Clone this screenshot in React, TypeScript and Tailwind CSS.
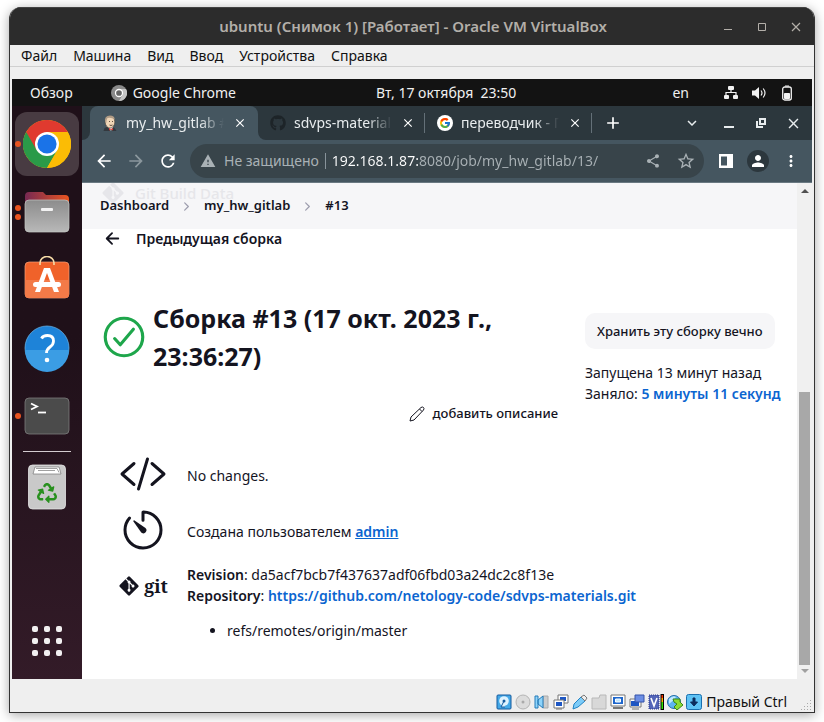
import type { ReactNode } from "react";
import {
  MdAdd,
  MdArrowBack,
  MdArrowForward,
  MdClose,
  MdExpandMore,
  MdMoreVert,
  MdPerson,
  MdRefresh,
  MdShare,
  MdStarBorder,
  MdWarning,
} from "react-icons/md";
import {
  IoArrowBackOutline,
  IoCheckmarkCircleOutline,
  IoChevronForward,
  IoCodeSlashOutline,
  IoTimerOutline,
} from "react-icons/io5";
import { FaGitAlt, FaGithub, FaRecycle } from "react-icons/fa";
import { FcGoogle } from "react-icons/fc";

const menu = ["Файл", "Машина", "Вид", "Ввод", "Устройства", "Справка"];

function TitleBar() {
  return (
    <header className="flex h-[38px] shrink-0 items-center border-t border-[#444] bg-[#2c2c2c] pr-1.5 text-[#b3afa9]">
      <div className="w-24" />
      <h1 className="grow text-center text-[15px] font-semibold">ubuntu (Снимок 1) [Работает] - Oracle VM VirtualBox</h1>
      <div className="flex gap-[18px] pr-1">
        <button aria-label="Свернуть" className="flex size-4 items-center justify-center">
          <svg viewBox="0 0 16 16" className="size-4"><path d="M4 10.5h8" stroke="currentColor" /></svg>
        </button>
        <button aria-label="Развернуть" className="flex size-4 items-center justify-center">
          <svg viewBox="0 0 16 16" className="size-4"><path d="M4.500 4.500h7v7h-7z" fill="none" stroke="currentColor" /></svg>
        </button>
        <button aria-label="Закрыть" className="flex size-4 items-center justify-center">
          <svg viewBox="0 0 16 16" className="size-4"><path d="M4 4l8 8M12 4l-8 8" stroke="currentColor" strokeWidth="1.200" /></svg>
        </button>
      </div>
    </header>
  );
}

function MenuBar() {
  return (
    <nav className="flex h-[22px] shrink-0 items-center gap-4 border-b border-[#d0d0d0] px-[11px] text-sm text-[#111]">
      {menu.map((m) => (
        <button key={m}>{m}</button>
      ))}
    </nav>
  );
}

function ChromeLogo({ className }: { className: string }) {
  return (
    <svg viewBox="0 0 48 48" className={className}>
      <circle cx="24" cy="24" r="24" fill="#fbbc05" />
      <path d="M24 24L3.200 12A24 24 0 0 0 24 48L34.400 30z" fill="#2a9a48" />
      <path d="M24 12H44.800A24 24 0 0 0 3.200 12L13.600 30z" fill="#e03a2f" />
      <path d="M24 12H44.800A24 24 0 0 1 24 48L34.400 30z" fill="#fbbc05" />
      <circle cx="24" cy="24" r="12" fill="#fff" />
      <circle cx="24" cy="24" r="9.600" fill="#1a73e8" />
    </svg>
  );
}

function SystemBar() {
  return (
    <div className="flex h-[27px] shrink-0 items-center bg-[#131313] text-sm text-[#f0f0f0]">
      <div className="flex w-[364px] shrink-0 items-center gap-[38px] pl-[18px]">
        <button>Обзор</button>
        <button className="flex items-center gap-1.5">
          <svg viewBox="0 0 16 16" className="size-4">
            <circle cx="8" cy="8" r="8" fill="#8a8a8a" />
            <path d="M8 4h7A8 8 0 0 1 8 16l3.500-6z" fill="#c4c4c4" />
            <circle cx="8" cy="8" r="3.500" fill="#666" stroke="#fff" strokeWidth="1.300" />
          </svg>
          Google Chrome
        </button>
      </div>
      <button className="whitespace-pre">Вт, 17 октября  23:50</button>
      <div className="flex flex-1 items-center justify-end gap-3 pr-[17px]">
        <button className="mr-[22px]">en</button>
        <svg viewBox="0 0 16 16" className="size-4" fill="#f2f2f2">
          <rect x="5" y="1" width="6" height="4" rx="1" />
          <rect x="1" y="10" width="5" height="4" rx="1" />
          <rect x="10" y="10" width="5" height="4" rx="1" />
          <path d="M3 11V7.500h10V11M8 4v3.500" fill="none" stroke="#f2f2f2" strokeWidth="1.200" />
        </svg>
        <svg viewBox="0 0 16 16" className="size-4" fill="#f2f2f2">
          <path d="M1 5.500h3L8 2v12L4 10.500H1z" />
          <path d="M10 5.500q2 2.500 0 5M12.200 3.500q3.600 4.500 0 9" fill="none" stroke="#f2f2f2" strokeWidth="1.200" />
        </svg>
        <svg viewBox="0 0 16 16" className="size-4">
          <rect x="3.700" y="2" width="8.600" height="13" rx="2" fill="none" stroke="#f2f2f2" strokeWidth="1.300" />
          <path d="M6 1h4M5.500 8.500h5v5h-5z" fill="#f2f2f2" stroke="#f2f2f2" />
        </svg>
      </div>
    </div>
  );
}

function DockItem({ label, dots = 0, active, children }: { label: string; dots?: number; active?: boolean; children: ReactNode }) {
  return (
    <button
      aria-label={label}
      className={`relative flex size-16 shrink-0 items-center justify-center rounded-xl ${active ? "bg-[#483b42]" : ""}`}
    >
      <span className="absolute inset-y-0 left-0 flex flex-col justify-center gap-[3px]">
        {Array.from({ length: dots }, (_, i) => (
          <i key={i} className="size-1.5 rounded-full bg-[#e95420]" />
        ))}
      </span>
      {children}
    </button>
  );
}

function Dock() {
  return (
    <aside className="flex w-[70px] shrink-0 flex-col items-center gap-1 bg-linear-to-b from-[#1f1019] from-40% to-[#331b28] py-1.5">
      <DockItem label="Google Chrome" dots={1} active>
        <ChromeLogo className="size-12" />
      </DockItem>
      <DockItem label="Файлы" dots={2}>
        <svg viewBox="0 0 48 48" className="size-12">
          <defs>
            <linearGradient id="folder"><stop offset="0" stopColor="#772953" /><stop offset="1" stopColor="#e95420" /></linearGradient>
            <linearGradient id="drawer" x2="0" y2="1"><stop offset="0" stopColor="#8c8c8c" /><stop offset="1" stopColor="#b8b8b8" /></linearGradient>
          </defs>
          <path d="M2 8a4 4 0 0 1 4-4h14l3 3h19a4 4 0 0 1 4 4v12H2z" fill="url(#folder)" />
          <rect x="2" y="12" width="44" height="32" rx="4" fill="url(#drawer)" stroke="#c4c8c4" strokeWidth=".7" />
          <rect x="18" y="20" width="12" height="3" rx="1" fill="#f2f2f2" />
        </svg>
      </DockItem>
      <DockItem label="Ubuntu Software">
        <svg viewBox="0 0 48 48" className="size-12">
          <rect x="2" y="6" width="44" height="36" rx="4" fill="#f0622a" stroke="#f6a07a" strokeWidth=".7" />
          <path d="M2 24h44v14a4 4 0 0 1-4 4H6a4 4 0 0 1-4-4z" fill="#f37a48" />
          <path d="M17 9V7a7 6.500 0 0 1 14 0v2" fill="none" stroke="#f7dca8" strokeWidth="1.600" />
          <path d="M21 12h6l9 24h-5l-7-19-7 19h-5z" fill="#fff" />
          <rect x="10" y="26" width="28" height="5" rx="2.500" fill="#fff" />
        </svg>
      </DockItem>
      <DockItem label="Справка">
        <svg viewBox="0 0 48 48" className="size-12">
          <circle cx="24" cy="24" r="22" fill="#1e83d8" stroke="#6bb8ec" strokeWidth=".7" />
          <path d="M2 26a22 22 0 0 0 44 0z" fill="#3b9de4" />
          <path d="M18.500 14.500q1.500-3 6-3 6 0 6 5.500 0 3.500-3.500 6-3.500 2.500-3.500 6" fill="none" stroke="#fff" strokeWidth="2.800" />
          <circle cx="24" cy="36" r="2.300" fill="#fff" />
        </svg>
      </DockItem>
      <DockItem label="Терминал" dots={1}>
        <svg viewBox="0 0 48 48" className="size-12">
          <rect x="2" y="6" width="44" height="36" rx="4" fill="#4b4b4b" stroke="#7c7c7c" strokeWidth=".8" />
          <path d="M8 11.500l6 3-6 3" fill="none" stroke="#fff" strokeWidth="1.800" />
          <path d="M15 20.500h8" stroke="#fff" strokeWidth="1.800" />
        </svg>
      </DockItem>
      <hr className="-my-px w-12 border-[#d4ccd0]" />
      <DockItem label="Корзина">
        <svg viewBox="0 0 48 48" className="size-12">
          <rect x="5.500" y="2" width="37" height="44" rx="4" fill="#c9c9c9" stroke="#e4e4e4" strokeWidth=".8" />
          <path d="M12 4h24l2 7H10z" fill="#fff" stroke="#777" strokeWidth=".7" />
          <path d="M13 5.500h21l2 4M15 7.500h17" fill="none" stroke="#888" strokeWidth=".8" />
          <FaRecycle x="14" y="20" size="20" color="#28901e" />
        </svg>
      </DockItem>
      <div className="grow" />
      <DockItem label="Показать приложения">
        <span className="grid grid-cols-3 gap-1.5">
          {Array.from({ length: 9 }, (_, i) => (
            <i key={i} className="size-1.5 rounded-[2px] bg-[#f2f0f1]" />
          ))}
        </span>
      </DockItem>
    </aside>
  );
}

function Jenkins() {
  return (
    <svg viewBox="0 0 16 16" className="size-4 shrink-0">
      <path d="M1.500 16l1-3 5-2 5 2 2 3z" fill="#33393f" />
      <path d="M6 12l3 4 2-4z" fill="#f4f4f4" />
      <ellipse cx="8" cy="7" rx="4.800" ry="6" fill="#f0d6b7" stroke="#4a4038" strokeWidth=".6" />
      <path d="M3 7Q2 1 8 .6q4.500 0 4.800 4Q9 2 5.500 3 4.500 4 4.300 8z" fill="#b09c86" />
      <path d="M7 6.500h1M10 6.500h1M7.500 10q1.500 1 3 0" stroke="#3c2c24" strokeWidth=".8" fill="none" />
      <path d="M7 13l2 1 2-1v2.500l-2-1-2 1z" fill="#d33833" />
    </svg>
  );
}

function Tab({ icon, title, active }: { icon: ReactNode; title: string; active?: boolean }) {
  return (
    <div
      className={`flex h-full min-w-0 items-center pr-2 pl-3 ${
        active ? "w-[168px] rounded-t-lg bg-[#455660]" : "w-[167px] border-r border-[#647078]"
      }`}
    >
      {icon}
      <button className="ml-2 w-[98px] overflow-hidden mask-r-from-75% text-left text-sm whitespace-nowrap text-[#e8ecee]">{title}</button>
      <button aria-label="Закрыть вкладку" className="ml-2 flex size-4 items-center justify-center text-white">
        <MdClose size={14} />
      </button>
    </div>
  );
}

function TabStrip() {
  return (
    <div className="flex h-[34px] shrink-0 bg-[#455660]">
      <div className="w-2 shrink-0 rounded-br-lg bg-[#2c373d]" />
      <div className="bg-linear-to-b from-[#2c373d] from-50% to-[#455660] to-50%">
        <Tab active icon={<Jenkins />} title="my_hw_gitlab #13" />
      </div>
      <div className="flex min-w-0 grow items-center rounded-bl-lg bg-[#2c373d]">
        <div className="h-5 shrink">
          <Tab icon={<FaGithub size={16} className="shrink-0 text-[#1d2428]" />} title="sdvps-materials/s" />
        </div>
        <div className="h-5 shrink">
          <Tab
            icon={<span className="rounded-full bg-white p-0.5"><FcGoogle size={12} /></span>}
            title="переводчик - П"
          />
        </div>
        <button aria-label="Новая вкладка" className="ml-[11px] text-white"><MdAdd size={20} /></button>
        <div className="grow" />
        <div className="flex items-center gap-4 pr-2.5 text-[#e8ecee]">
          <button aria-label="Поиск вкладок" className="mr-1"><MdExpandMore size={18} /></button>
          <button aria-label="Свернуть окно">
            <svg viewBox="0 0 16 16" className="size-4"><path d="M3 12h10" stroke="currentColor" strokeWidth="2" /></svg>
          </button>
          <button aria-label="Восстановить окно">
            <svg viewBox="0 0 16 16" className="size-4" fill="none" stroke="currentColor" strokeWidth="2">
              <path d="M7 4h5v5H7zM4 6v6h6" />
            </svg>
          </button>
          <button aria-label="Закрыть окно"><MdClose size={17} /></button>
        </div>
      </div>
    </div>
  );
}

function Toolbar() {
  return (
    <div className="flex h-[43px] shrink-0 items-center border-b border-[#6a7982] bg-[#455660] pr-3 pl-3 text-white">
      <div className="flex gap-3">
        <button aria-label="Назад"><MdArrowBack size={20} /></button>
        <button aria-label="Вперёд" className="text-[#8b979d]"><MdArrowForward size={20} /></button>
        <button aria-label="Обновить"><MdRefresh size={20} /></button>
      </div>
      <div className="ml-3 flex h-[34px] min-w-0 grow items-center rounded-full bg-[#38444a] pr-2 pl-2.5 text-sm text-[#a9b1b5]">
        <MdWarning size={16} className="shrink-0" />
        <span className="ml-2 shrink-0">Не защищено</span>
        <span className="mx-1.5 h-4 w-px shrink-0 bg-[#88939a]" />
        <input
          aria-label="Адрес"
          defaultValue="192.168.1.87:8080/job/my_hw_gitlab/13/"
          className="min-w-0 grow bg-linear-to-r from-white from-[86px] to-[#a9b1b5] to-[86px] bg-clip-text text-transparent outline-none"
        />
        <button aria-label="Поделиться" className="mr-[15px]"><MdShare size={16} /></button>
        <button aria-label="Добавить в закладки"><MdStarBorder size={20} /></button>
      </div>
      <button aria-label="Боковая панель" className="ml-[14px]">
        <svg viewBox="0 0 16 16" className="size-4"><path d="M1 1h14v14H1zM3 3.500v9h6v-9z" fill="currentColor" fillRule="evenodd" /></svg>
      </button>
      <button aria-label="Профиль" className="ml-[13px] flex size-[22px] shrink-0 items-center justify-center rounded-full bg-[#2c373d]">
        <MdPerson size={18} />
      </button>
      <button aria-label="Меню" className="ml-[13px]"><MdMoreVert size={18} /></button>
    </div>
  );
}

function Breadcrumbs() {
  return (
    <nav className="relative flex h-[46px] shrink-0 items-center gap-[11px] overflow-hidden bg-[#f6f6f8] pl-[18px] text-[13px] font-semibold text-[#14141f]">
      <span aria-hidden="true" className="absolute -top-0.5 left-[19px] flex items-center gap-2.5 text-[15px] leading-5 font-medium text-[#e6e6ea]">
        <FaGitAlt size={24} />
        Git Build Data
      </span>
      <a href="#dashboard" className="relative">Dashboard</a>
      <IoChevronForward size={13} className="relative text-[#9c9cad]" />
      <a href="#job" className="relative">my_hw_gitlab</a>
      <IoChevronForward size={13} className="relative text-[#9c9cad]" />
      <a href="#build" className="relative">#13</a>
    </nav>
  );
}

function SummaryRow({ icon, children }: { icon: ReactNode; children: ReactNode }) {
  return (
    <div className="flex items-center gap-5">
      <div className="flex w-12 shrink-0 justify-center">{icon}</div>
      <div className="pt-0.5">{children}</div>
    </div>
  );
}

function BuildPage() {
  return (
    <main className="grow pr-5 pl-[21px] text-sm leading-[21px] text-[#14141f]">
      <a href="#previous" className="flex items-center gap-3.5 text-sm leading-[18px] font-semibold">
        <IoArrowBackOutline size={19} />
        Предыдущая сборка
      </a>
      <div className="mt-[51px] flex">
        <div className="grow">
          <div className="flex items-center gap-1.5">
            <IoCheckmarkCircleOutline size={50} className="-mr-0.5 -ml-1 shrink-0 text-[#1ea64b]" />
            <h2 className="text-[25px] leading-[38px] font-bold">Сборка #13 (17 окт. 2023 г., 23:36:27)</h2>
          </div>
          <button className="mt-7 mr-[27px] ml-auto flex items-center gap-2 text-[13px] font-medium">
            <svg viewBox="0 0 16 16" className="size-4" fill="none" stroke="currentColor" strokeWidth="1">
              <path d="M1 15l1-4L12 1.500q1.500-1 2.500 0t0 2.500L5 14zM10.500 3l2.500 2.500" />
            </svg>
            добавить описание
          </button>
        </div>
        <div className="w-48 shrink-0 pt-[14px] whitespace-nowrap">
          <button className="mb-[13px] h-9 rounded-[10px] bg-[#f6f6f8] px-3 text-[13px] font-medium">Хранить эту сборку вечно</button>
          <p>Запущена 13 минут назад</p>
          <p>
            Заняло: <a href="#time" className="font-semibold text-[#0b65d0]">5 минуты 11 секунд</a>
          </p>
        </div>
      </div>
      <div className="mt-[26px] flex flex-col gap-2 pl-4">
        <SummaryRow icon={<IoCodeSlashOutline size={48} />}>No changes.</SummaryRow>
        <SummaryRow icon={<IoTimerOutline size={48} />}>
          Создана пользователем <a href="#admin" className="font-semibold text-[#0b65d0] underline">admin</a>
        </SummaryRow>
        <SummaryRow
          icon={
            <span className="flex items-center gap-1 pt-1 font-['Noto_Serif','DejaVu_Serif',serif] text-lg font-bold">
              <FaGitAlt size={22} />
              git
            </span>
          }
        >
          <p><b className="font-semibold">Revision</b>: da5acf7bcb7f437637adf06fbd03a24dc2c8f13e</p>
          <p>
            <b className="font-semibold">Repository</b>:{" "}
            <a href="#repo" className="font-semibold text-[#0b65d0]">https://github.com/netology-code/sdvps-materials.git</a>
          </p>
        </SummaryRow>
      </div>
      <ul className="mt-3.5 list-disc pl-[124px]">
        <li>refs/remotes/origin/master</li>
      </ul>
    </main>
  );
}

function Scrollbar() {
  return (
    <div aria-hidden="true" className="flex w-[15px] shrink-0 flex-col items-center bg-[#f0f0f0] py-1.5">
      <svg viewBox="0 0 8 4" className="h-1 w-2"><path d="M0 4l4-4 4 4z" fill="#505050" /></svg>
      <div className="flex-[199]" />
      <div className="w-[11px] flex-[272] bg-[#a8a8a8]" />
      <svg viewBox="0 0 8 4" className="mt-1 h-1 w-2"><path d="M0 0l4 4 4-4z" fill="#a0a0a0" /></svg>
    </div>
  );
}

const statusIcons: [string, ReactNode][] = [
  ["Жёсткие диски", <><rect x="1" y="1" width="14" height="14" rx="1" fill="#44a9e8" stroke="#145a9e" /><circle cx="8" cy="7" r="4.800" fill="#dff3ff" /><path d="M8 7l-3 6h4" fill="#dff3ff" stroke="#145a9e" /><circle cx="8" cy="7" r="1.500" fill="#145a9e" /></>],
  ["Оптические диски", <><circle cx="8" cy="8" r="7" fill="#dcdcdc" stroke="#b4b4b4" /><circle cx="8" cy="8" r="1.500" fill="#aaa" /></>],
  ["Аудио", <><path d="M9 2h5v12H9z" fill="#ccc" stroke="#aaa" /><path d="M1 2h3v12H1zM4 6l5-4v12l-5-4z" fill="#8fd4fa" stroke="#257bb8" /></>],
  ["Сеть", <><path d="M5 1h10v8H5z" fill="#fff" stroke="#777" /><path d="M7 3h6v4H7z" fill="#1d56c4" /><path d="M1 6h10v8H1z" fill="#fff" stroke="#777" /><path d="M3 8h6v4H3z" fill="#1d56c4" /><path d="M3 15h6" stroke="#777" /></>],
  ["USB", <><path d="M1 15l1-5 7-7 4 4-7 6z" fill="#7ccbf8" stroke="#2183c4" /><path d="M9 3l3-2 3 3-2 3z" fill="#eee" stroke="#777" /></>],
  ["Общие папки", <path d="M1 4h7l1-3h6v14H1z" fill="#d8d8d8" stroke="#b8b8b8" />],
  ["Дисплей", <><path d="M1 1h14v11H1z" fill="#fff" stroke="#777" /><path d="M3 3h10v7H3z" fill="#1d66cc" /><path d="M5.500 5h5v3h-5z" fill="#bfe6ff" stroke="#fff" /><path d="M3 14h10" stroke="#777" strokeWidth="2" /></>],
  ["Запись", <><path d="M1 5h11v8H1z" fill="#fff" stroke="#777" /><path d="M2 7h8v5H2z" fill="#1d56c4" /><path d="M6 1h9v7H6z" fill="#6c8ee4" stroke="#3453a8" /><path d="M3 15h7" stroke="#777" /></>],
  ["Процессор", <><path d="M1 1h10v14H1z" fill="#5365b8" stroke="#2c3a8c" strokeDasharray="1 1" /><path d="M3 4l3 8 3-8" fill="none" stroke="#fff" strokeWidth="1.600" /><path d="M12.500 0h3.500v16h-3.500z" fill="#000" /><path d="M13.500 8h1.500v7h-1.500z" fill="#2fe000" /><path d="M13.500 4h1.500v4h-1.500z" fill="#ffb000" /><path d="M13.500 1h1.500v3h-1.500z" fill="#f03000" /></>],
  ["Интеграция мыши", <><circle cx="7" cy="8" r="6.500" fill="#5db5f0" stroke="#236ca8" /><path d="M2 5q4-4 7-2-4 5-7 7z" fill="#bfe8ff" /><path d="M6 5l7 0v3l3 3-6 5-3-3 3-3-3-2z" fill="#8bdc35" stroke="#39851a" /></>],
  ["Захват клавиатуры", <><rect x="0.500" y="0.500" width="15" height="15" rx="2" fill="#5ec2f4" stroke="#1a6fae" /><path d="M7 4h2v4h2.500L8 12 4.500 8H7z" fill="#0c2c5c" stroke="#0c2c5c" /></>],
];

function StatusBar() {
  return (
    <footer className="flex h-[33px] shrink-0 items-center justify-end pt-3 text-sm text-[#111]">
      <div className="flex gap-[3px]">
        {statusIcons.map(([label, drawing]) => (
          <button key={label} aria-label={label}>
            <svg viewBox="0 0 16 16" className="size-4">{drawing}</svg>
          </button>
        ))}
      </div>
      <span className="mr-[14px] ml-1">Правый Ctrl</span>
      <svg viewBox="0 0 12 12" className="mr-px size-3 self-end" fill="#aaa">
        <path d="M9 0h1v1h-1zM6 3h1v1h-1zM9 3h1v1h-1zM3 6h1v1h-1zM6 6h1v1h-1zM9 6h1v1h-1zM0 9h1v1H0zM3 9h1v1h-1zM6 9h1v1h-1zM9 9h1v1h-1z" />
      </svg>
    </footer>
  );
}

export default function App() {
  return (
    <div className="flex min-h-screen flex-col bg-white px-[9px] pt-[7px] pb-[9px] font-['Noto_Sans',sans-serif]">
      <div className="flex grow flex-col overflow-hidden rounded-t-xl border border-t-0 border-[#333] bg-[#efefef] shadow-[0_2px_12px_rgba(0,0,0,0.35)]">
        <TitleBar />
        <MenuBar />
        <div className="mx-0.5 mt-3 flex grow flex-col">
          <SystemBar />
          <div className="flex grow">
            <Dock />
            <div className="flex min-w-0 grow flex-col bg-white">
              <TabStrip />
              <Toolbar />
              <div className="flex grow">
                <div className="flex min-w-0 grow flex-col">
                  <Breadcrumbs />
                  <BuildPage />
                </div>
                <Scrollbar />
              </div>
            </div>
          </div>
        </div>
        <StatusBar />
      </div>
    </div>
  );
}
